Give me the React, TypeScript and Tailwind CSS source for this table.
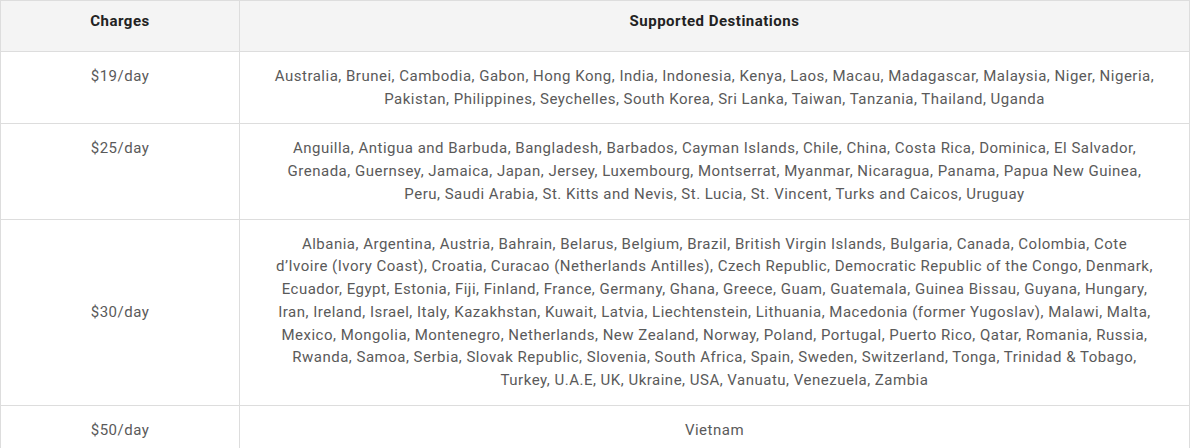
import React from "react";

interface Plan {
  charge: string;
  lines: string[];
  middle?: boolean;
}

const plans: Plan[] = [
  {
    charge: "$19/day",
    lines: [
      "Australia, Brunei, Cambodia, Gabon, Hong Kong, India, Indonesia, Kenya, Laos, Macau, Madagascar, Malaysia, Niger, Nigeria,",
      "Pakistan, Philippines, Seychelles, South Korea, Sri Lanka, Taiwan, Tanzania, Thailand, Uganda",
    ],
  },
  {
    charge: "$25/day",
    lines: [
      "Anguilla, Antigua and Barbuda, Bangladesh, Barbados, Cayman Islands, Chile, China, Costa Rica, Dominica, El Salvador,",
      "Grenada, Guernsey, Jamaica, Japan, Jersey, Luxembourg, Montserrat, Myanmar, Nicaragua, Panama, Papua New Guinea,",
      "Peru, Saudi Arabia, St. Kitts and Nevis, St. Lucia, St. Vincent, Turks and Caicos, Uruguay",
    ],
  },
  {
    charge: "$30/day",
    middle: true,
    lines: [
      "Albania, Argentina, Austria, Bahrain, Belarus, Belgium, Brazil, British Virgin Islands, Bulgaria, Canada, Colombia, Cote",
      "d’Ivoire (Ivory Coast), Croatia, Curacao (Netherlands Antilles), Czech Republic, Democratic Republic of the Congo, Denmark,",
      "Ecuador, Egypt, Estonia, Fiji, Finland, France, Germany, Ghana, Greece, Guam, Guatemala, Guinea Bissau, Guyana, Hungary,",
      "Iran, Ireland, Israel, Italy, Kazakhstan, Kuwait, Latvia, Liechtenstein, Lithuania, Macedonia (former Yugoslav), Malawi, Malta,",
      "Mexico, Mongolia, Montenegro, Netherlands, New Zealand, Norway, Poland, Portugal, Puerto Rico, Qatar, Romania, Russia,",
      "Rwanda, Samoa, Serbia, Slovak Republic, Slovenia, South Africa, Spain, Sweden, Switzerland, Tonga, Trinidad & Tobago,",
      "Turkey, U.A.E, UK, Ukraine, USA, Vanuatu, Venezuela, Zambia",
    ],
  },
  {
    charge: "$50/day",
    lines: ["Vietnam"],
  },
];

const App: React.FC = () => {
  return (
    <div className="w-[1192px] h-[448px] overflow-hidden bg-white font-['Roboto',sans-serif] text-[15px] tracking-[0.5px] leading-[22.75px]">
      <table className="w-[1190px] border-collapse border border-[#dddddd] table-fixed">
        <thead>
          <tr className="bg-[#f4f4f4]">
            <th className="w-[239px] border border-[#dddddd] pt-[9px] pb-[18px] text-center font-bold text-[#222222]">
              Charges
            </th>
            <th className="border border-[#dddddd] pt-[9px] pb-[18px] text-center font-bold text-[#222222]">
              Supported Destinations
            </th>
          </tr>
        </thead>
        <tbody>
          {plans.map((plan) => (
            <tr key={plan.charge}>
              <td
                className={`border border-[#dddddd] pt-[13px] pb-[13px] text-center text-[#5a5a5a] ${
                  plan.middle ? "align-middle" : "align-top"
                }`}
              >
                {plan.charge}
              </td>
              <td className="border border-[#dddddd] pt-[13px] pb-[13px] text-center text-[#5a5a5a] align-top">
                {plan.lines.map((line, i) => (
                  <div key={i} className="whitespace-nowrap">
                    {line}
                  </div>
                ))}
              </td>
            </tr>
          ))}
        </tbody>
      </table>
    </div>
  );
};

export default App;
